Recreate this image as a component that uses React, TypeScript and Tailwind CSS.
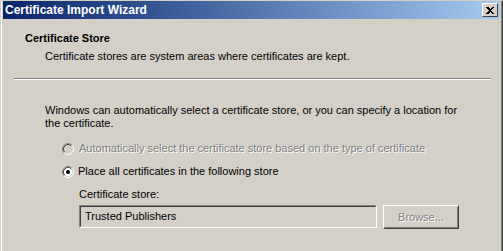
import React from "react";

function Radio({ checked, disabled }: { checked?: boolean; disabled?: boolean }) {
  return (
    <svg width="12" height="12" viewBox="0 0 12 12" className="shrink-0">
      <circle cx="6" cy="6" r="5" fill={disabled ? "#d4d0c8" : "#ffffff"} />
      <path d="M 2.11 9.89 A 5.5 5.5 0 0 1 9.89 2.11" fill="none" stroke="#808080" strokeWidth="1" />
      <path d="M 9.89 2.11 A 5.5 5.5 0 0 1 2.11 9.89" fill="none" stroke="#ffffff" strokeWidth="1" />
      <path d="M 2.82 9.18 A 4.5 4.5 0 0 1 9.18 2.82" fill="none" stroke="#404040" strokeWidth="1" />
      <path d="M 9.18 2.82 A 4.5 4.5 0 0 1 2.82 9.18" fill="none" stroke="#d4d0c8" strokeWidth="1" />
      {checked && <circle cx="6" cy="6" r="2" fill="#000000" />}
    </svg>
  );
}

const font = { fontFamily: '"Liberation Sans", Arial, sans-serif' };

export default function App() {
  return (
    <div
      className="w-[503px] h-[251px] overflow-hidden bg-[#d4d0c8] text-[11px] text-black"
      style={font}
    >
      <div className="h-full border-l border-t border-[#d4d0c8] border-r border-r-[#404040]">
        <div className="h-full border-l border-white border-r border-r-[#808080] pl-[1px] pr-[1px] flex flex-col">
          {/* Title bar */}
          <div className="h-[18px] flex items-center justify-between bg-gradient-to-r from-[#0a246a] to-[#a6caf0] pl-[2px] pr-[2px]">
            <span className="text-white font-bold text-[12px] leading-none">Certificate Import Wizard</span>
            <div className="w-[16px] h-[14px] bg-[#d4d0c8] border border-t-white border-l-white border-r-[#404040] border-b-[#404040] flex items-center justify-center">
              <svg width="8" height="7" viewBox="0 0 8 7" shapeRendering="crispEdges">
                <path d="M0 0 L2 0 L4 2 L6 0 L8 0 L5 3.5 L8 7 L6 7 L4 5 L2 7 L0 7 L3 3.5 Z" fill="#000" />
              </svg>
            </div>
          </div>

          {/* Header */}
          <div className="pl-[22px] pt-[13px]">
            <div className="font-bold leading-[13px]">Certificate Store</div>
            <div className="pl-[20px] mt-[5px] leading-[13px]">
              Certificate stores are system areas where certificates are kept.
            </div>
          </div>

          {/* Separator */}
          <div className="ml-[11px] mr-[9px] mt-[15px] h-[2px] border-t border-[#808080] border-b border-b-white" />

          {/* Body */}
          <div className="pl-[42px] pt-[24px]">
            <p className="leading-[13px]">
              Windows can automatically select a certificate store, or you can specify a location for
              <br />
              the certificate.
            </p>
            <div className="pl-[17px] mt-[12px] flex items-center gap-[5px] h-[13px]">
              <Radio disabled />
              <span className="text-[#808080] leading-[13px] [text-shadow:1px_1px_0_#ffffff]">
                Automatically select the certificate store based on the type of certificate
              </span>
            </div>
            <div className="pl-[17px] mt-[10px] flex items-center gap-[4px] h-[13px]">
              <Radio checked />
              <span className="leading-[13px]">Place all certificates in the following store</span>
            </div>
            <div className="pl-[34px] mt-[10px]">
              <div className="leading-[13px]">Certificate store:</div>
              <div className="mt-[4px] flex items-start gap-[6px]">
                <div className="w-[298px] h-[23px] border border-t-[#808080] border-l-[#808080] border-r-white border-b-white">
                  <div className="h-full border border-t-[#404040] border-l-[#404040] border-r-[#d4d0c8] border-b-[#d4d0c8] flex items-center pl-[4px]">
                    Trusted Publishers
                  </div>
                </div>
                <div className="w-[76px] h-[24px] border border-t-white border-l-white border-r-[#404040] border-b-[#404040]">
                  <div className="h-full border border-t-[#d4d0c8] border-l-[#d4d0c8] border-r-[#808080] border-b-[#808080] flex items-center justify-center text-[#808080] [text-shadow:1px_1px_0_#ffffff]">
                    Browse...
                  </div>
                </div>
              </div>
            </div>
          </div>
        </div>
      </div>
    </div>
  );
}
